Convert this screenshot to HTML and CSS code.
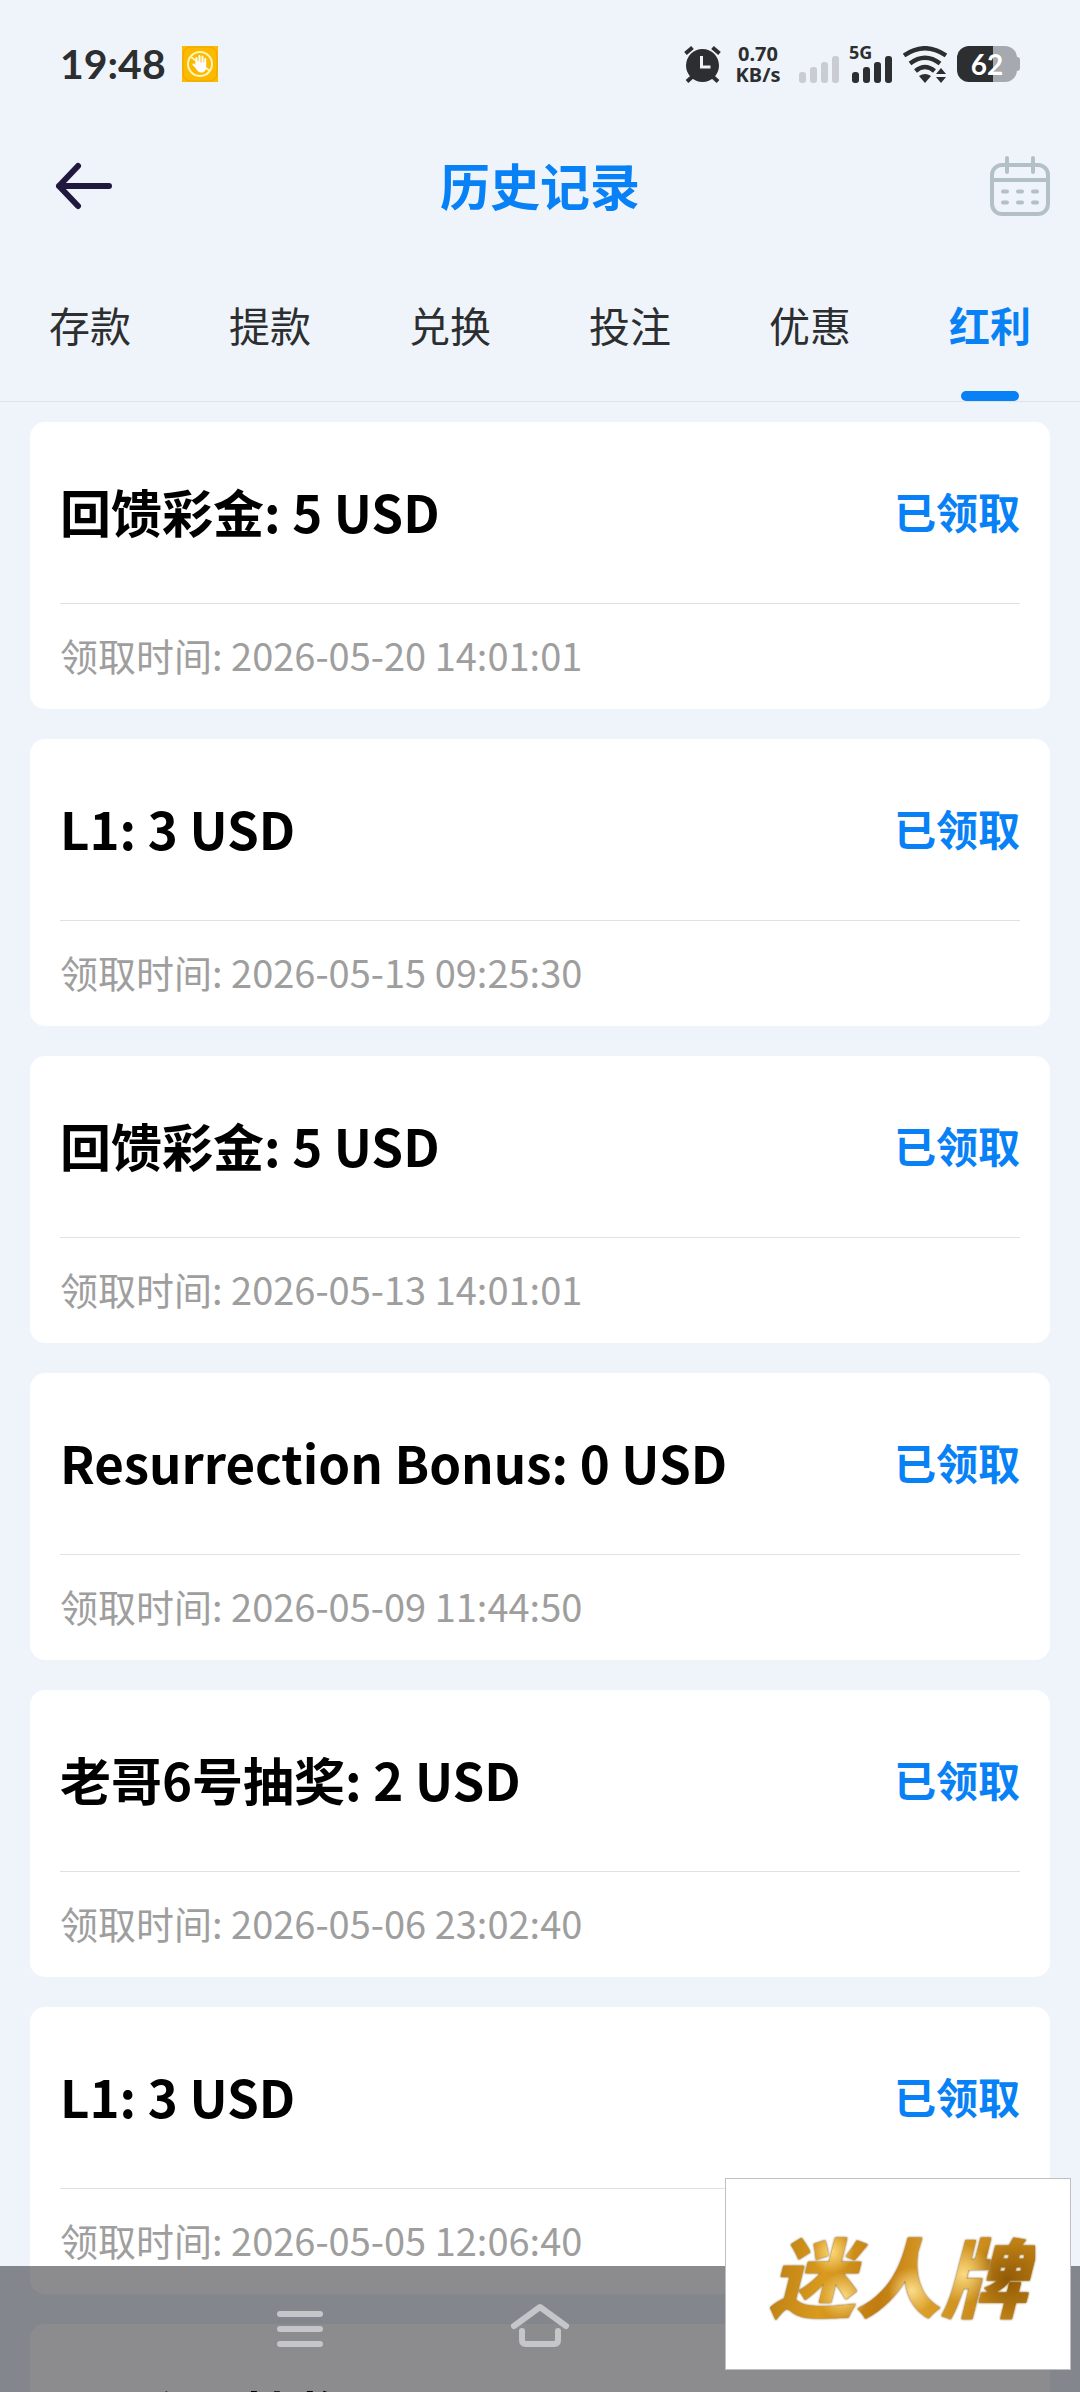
FILE: index.html
```html
<!DOCTYPE html>
<html lang="zh-CN">
<head>
    <meta charset="UTF-8">
    <meta name="viewport" content="width=device-width, initial-scale=1.0">
    <title>历史记录</title>
    <link rel="stylesheet" href="styles.css">
</head>
<body>
    <div class="status-bar">
        <div class="status-left">
            <span class="clock">19:48</span>
            <svg class="icon-app" viewBox="0 0 36 36">
                <rect width="36" height="36" fill="#fdb900"/>
                <rect x="1" y="1" width="34" height="34" rx="8" fill="none" stroke="#e9a800"/>
                <circle cx="18" cy="18" r="12" fill="none" stroke="#fff7b8" stroke-width="2"/>
                <path d="M9 11l19 14" stroke="#fff7b8" stroke-width="2"/>
                <path d="M14.500 18v-6M17.500 17v-7M20.500 17v-6.500M23.200 18v-5M15 22l-3.500-3.500" stroke="#fff" stroke-width="2" stroke-linecap="round"/>
                <path d="M13.500 16.500h10.700v4.500c0 3.500-2 5.500-4.800 5.500-2.700 0-4.200-1.800-5.900-4.500z" fill="#fff"/>
            </svg>
        </div>
        <div class="status-right">
            <svg class="icon-alarm" viewBox="0 0 37 37" fill="none" stroke="#2c2e30">
                <circle cx="18.500" cy="19.500" r="16.500" fill="#2c2e30" stroke="none"/>
                <path d="M1.500 7.500l7-6M35.500 7.500l-7-6M8 31l-5 4.500M29 31l5 4.500" stroke-width="4"/>
                <path d="M17.500 10v11h9" stroke="#eff4fb" stroke-width="3"/>
            </svg>
            <div class="speed">
                <span>0.70</span>
                <span>KB/s</span>
            </div>
            <svg class="icon-signal" viewBox="0 0 42 40" fill="#c9ccd3">
                <rect x="0" y="28" width="7" height="11" rx="3"/>
                <rect x="11" y="23" width="7" height="16" rx="3"/>
                <rect x="22" y="18" width="7" height="21" rx="3"/>
                <rect x="33" y="12" width="7" height="27" rx="3"/>
            </svg>
            <div class="signal-5g">
                <span class="net">5G</span>
                <svg class="icon-signal" viewBox="0 0 42 40" fill="#2c2e30">
                    <rect x="0" y="28" width="7" height="11" rx="3"/>
                    <rect x="11" y="23" width="7" height="16" rx="3"/>
                    <rect x="22" y="18" width="7" height="21" rx="3"/>
                    <rect x="33" y="12" width="7" height="27" rx="3"/>
                </svg>
            </div>
            <svg class="icon-wifi" viewBox="0 0 44 37" fill="none" stroke="#2c2e30" stroke-width="4.500">
                <path d="M1 9.500Q22-5 43 9.500M7 17.500Q22 6 37 17.500M12.500 25Q22 17 31.500 25"/>
                <path d="M16 30q6-4 12 0l-6 7z" fill="#2c2e30" stroke="none"/>
                <path d="M38 22l5 6H33zM38 37l5-6H33z" fill="#2c2e30" stroke="none"/>
            </svg>
            <div class="battery">62</div>
        </div>
    </div>

    <header class="header">
        <button class="btn-back" type="button" aria-label="返回">
            <svg viewBox="0 0 58 48" fill="none" stroke="#20183f" stroke-width="6" stroke-linecap="round" stroke-linejoin="round">
                <path d="M23 4L4 24l19 20M4 24h50"/>
            </svg>
        </button>
        <h1 class="title">历史记录</h1>
        <button class="btn-date" type="button" aria-label="选择日期">
            <svg viewBox="0 0 60 60" fill="none" stroke="#b3c0c6" stroke-width="4" stroke-linecap="round">
                <rect x="2" y="9" width="56" height="49" rx="10"/>
                <path d="M2 24h56" stroke-linecap="butt"/>
                <path d="M17 2v14M43 2v14"/>
                <path d="M13 35.500h4M28 35.500h4M43 35.500h4M13 46.500h4M28 46.500h4M43 46.500h4"/>
            </svg>
        </button>
    </header>

    <nav class="tabs">
        <a href="#">存款</a>
        <a href="#">提款</a>
        <a href="#">兑换</a>
        <a href="#">投注</a>
        <a href="#">优惠</a>
        <a class="active" href="#">红利</a>
    </nav>

    <ul class="list">
        <li class="card">
            <div class="card-top">
                <h2>回馈彩金: 5 USD</h2>
                <span class="state">已领取</span>
            </div>
            <p class="time">领取时间: 2026-05-20 14:01:01</p>
        </li>
        <li class="card">
            <div class="card-top">
                <h2>L1: 3 USD</h2>
                <span class="state">已领取</span>
            </div>
            <p class="time">领取时间: 2026-05-15 09:25:30</p>
        </li>
        <li class="card">
            <div class="card-top">
                <h2>回馈彩金: 5 USD</h2>
                <span class="state">已领取</span>
            </div>
            <p class="time">领取时间: 2026-05-13 14:01:01</p>
        </li>
        <li class="card">
            <div class="card-top">
                <h2>Resurrection Bonus: 0 USD</h2>
                <span class="state">已领取</span>
            </div>
            <p class="time">领取时间: 2026-05-09 11:44:50</p>
        </li>
        <li class="card">
            <div class="card-top">
                <h2>老哥6号抽奖: 2 USD</h2>
                <span class="state">已领取</span>
            </div>
            <p class="time">领取时间: 2026-05-06 23:02:40</p>
        </li>
        <li class="card">
            <div class="card-top">
                <h2>L1: 3 USD</h2>
                <span class="state">已领取</span>
            </div>
            <p class="time">领取时间: 2026-05-05 12:06:40</p>
        </li>
        <li class="card">
            <div class="card-top">
                <h2>5月六号抽奖: 3 USD</h2>
                <span class="state">已领取</span>
            </div>
        </li>
    </ul>

    <div class="nav-bar">
        <button type="button" aria-label="菜单">
            <svg class="icon-nav" viewBox="0 0 60 60" stroke="#c5c6ca" stroke-width="6" stroke-linecap="round">
                <path d="M10 15h40M10 30h40M10 45h40"/>
            </svg>
        </button>
        <button type="button" aria-label="主页">
            <svg class="icon-nav" viewBox="0 0 60 60" fill="none" stroke="#c5c6ca" stroke-width="6" stroke-linecap="round" stroke-linejoin="round">
                <path d="M4 27L30 8l26 19"/>
                <path d="M12 32v9q0 4 4 4h28q4 0 4-4v-9"/>
            </svg>
        </button>
        <button type="button" aria-label="返回">
            <svg class="icon-nav" viewBox="0 0 60 60" fill="none" stroke="#c5c6ca" stroke-width="6" stroke-linecap="round" stroke-linejoin="round">
                <path d="M38 10L18 30l20 20"/>
            </svg>
        </button>
    </div>

    <div class="brand"><span>迷人牌</span></div>
</body>
</html>
```

FILE: styles.css
```css
* {
    box-sizing: border-box;
    margin: 0;
    padding: 0;
}

body {
    display: flex;
    flex-direction: column;
    height: 100vh;
    overflow: hidden;
    background: #eff4fb;
    color: #2c2e30;
    font-family: "Noto Sans CJK SC", sans-serif;
}

button {
    border: 0;
    background: none;
}

svg {
    display: block;
}

/* status bar */
.status-bar {
    display: flex;
    flex: none;
    justify-content: space-between;
    align-items: center;
    height: 120px;
    padding: 8px 63px 0 60px;
}

.status-left,
.status-right {
    display: flex;
    align-items: center;
}

.status-left {
    gap: 16px;
}

.clock {
    font-family: Lato, sans-serif;
    font-size: 41px;
    font-weight: 700;
    line-height: 48px;
}

.icon-app {
    width: 36px;
    height: 36px;
}

.icon-alarm {
    width: 37px;
    height: 37px;
    margin-right: 15px;
}

.speed {
    display: flex;
    flex-direction: column;
    align-items: center;
    width: 44px;
    margin-right: 19px;
    font-family: "Noto Sans", sans-serif;
    font-size: 20px;
    font-weight: 700;
    line-height: 21px;
}

.icon-signal {
    width: 42px;
    height: 40px;
}

.signal-5g {
    position: relative;
    margin: 0 9px 0 11px;
}

.net {
    position: absolute;
    top: -2px;
    left: -3px;
    font-family: "Noto Sans", sans-serif;
    font-size: 18px;
    font-weight: 700;
    line-height: 20px;
}

.icon-wifi {
    width: 44px;
    height: 37px;
    margin-right: 10px;
}

.battery {
    position: relative;
    width: 60px;
    border-radius: 12px;
    background: linear-gradient(to right, #2c2e30 60%, #a6a9b0 60%);
    color: #fff;
    font-family: Lato, sans-serif;
    font-size: 28px;
    font-weight: 700;
    line-height: 36px;
    text-align: center;
}

.battery::after {
    content: "";
    position: absolute;
    top: 11px;
    right: -3px;
    width: 3px;
    height: 14px;
    border-radius: 0 3px 3px 0;
    background: #a6a9b0;
}

/* header */
.header {
    display: flex;
    flex: none;
    justify-content: space-between;
    align-items: center;
    height: 132px;
    padding: 0 30px;
}

.btn-back,
.btn-date {
    width: 108px;
}

.btn-back svg {
    width: 58px;
    height: 48px;
    margin-left: 25px;
}

.btn-date svg {
    width: 60px;
    height: 60px;
    margin-left: auto;
}

.title {
    padding-bottom: 4px;
    color: #0781f5;
    font-size: 50px;
    font-weight: 700;
    line-height: 60px;
}

/* tabs */
.tabs {
    display: grid;
    flex: none;
    grid-template-columns: repeat(6, 1fr);
    border-bottom: 1px solid #dfe3e8;
}

.tabs a {
    position: relative;
    padding-bottom: 5px;
    color: #2c2e30;
    font-size: 41px;
    line-height: 144px;
    text-align: center;
    text-decoration: none;
}

.tabs .active {
    color: #0781f5;
    font-weight: 700;
}

.tabs .active::after {
    content: "";
    position: absolute;
    bottom: 0;
    left: 50%;
    width: 58px;
    height: 10px;
    margin-left: -29px;
    border-radius: 5px;
    background: #0781f5;
}

/* records */
.list {
    display: flex;
    flex: 1;
    flex-direction: column;
    gap: 30px;
    min-height: 0;
    padding: 20px 30px 0;
    overflow: hidden;
    list-style: none;
}

.card {
    flex: none;
    padding: 0 30px;
    border-radius: 15px;
    background: #fff;
}

.card-top {
    display: flex;
    justify-content: space-between;
    align-items: center;
    height: 182px;
    padding-bottom: 4px;
    border-bottom: 1px solid #dfe1e3;
}

.card h2 {
    color: #000;
    font-size: 51px;
    font-weight: 700;
    line-height: 60px;
}

.state {
    color: #0781f5;
    font-size: 42px;
    font-weight: 700;
    line-height: 60px;
}

.time {
    padding-bottom: 3px;
    color: #9e9e9e;
    font-size: 38px;
    line-height: 102px;
}

/* system navigation */
.nav-bar {
    position: fixed;
    right: 0;
    bottom: 0;
    left: 0;
    display: flex;
    justify-content: center;
    align-items: center;
    gap: 180px;
    height: 126px;
    background: rgba(0, 0, 5, 0.45);
}

.icon-nav {
    width: 60px;
    height: 60px;
}

.brand {
    position: fixed;
    right: 9px;
    bottom: 22px;
    display: flex;
    justify-content: center;
    align-items: center;
    width: 346px;
    height: 192px;
    border: 1px solid #bfc0c4;
    background: #fff;
}

.brand span {
    padding: 0 8px;
    background:
        radial-gradient(circle at 30% 70%, rgba(255, 226, 140, 0.9), transparent 12%),
        radial-gradient(circle at 55% 65%, rgba(255, 228, 150, 0.9), transparent 14%),
        radial-gradient(circle at 26% 30%, rgba(255, 222, 130, 0.9), transparent 10%),
        radial-gradient(circle at 74% 50%, rgba(255, 226, 140, 0.9), transparent 14%),
        radial-gradient(circle at 90% 55%, rgba(140, 85, 5, 0.9), transparent 16%),
        linear-gradient(100deg, #b5790f, #d99a1e 25%, #c07c10 45%, #dda02a 60%, #c98a1a 80%, #b5790f);
    -webkit-background-clip: text;
    background-clip: text;
    color: transparent;
    filter: drop-shadow(0 0 1px #7a4e08);
    font-size: 86px;
    font-style: italic;
    font-weight: 900;
    line-height: 110px;
}
```
